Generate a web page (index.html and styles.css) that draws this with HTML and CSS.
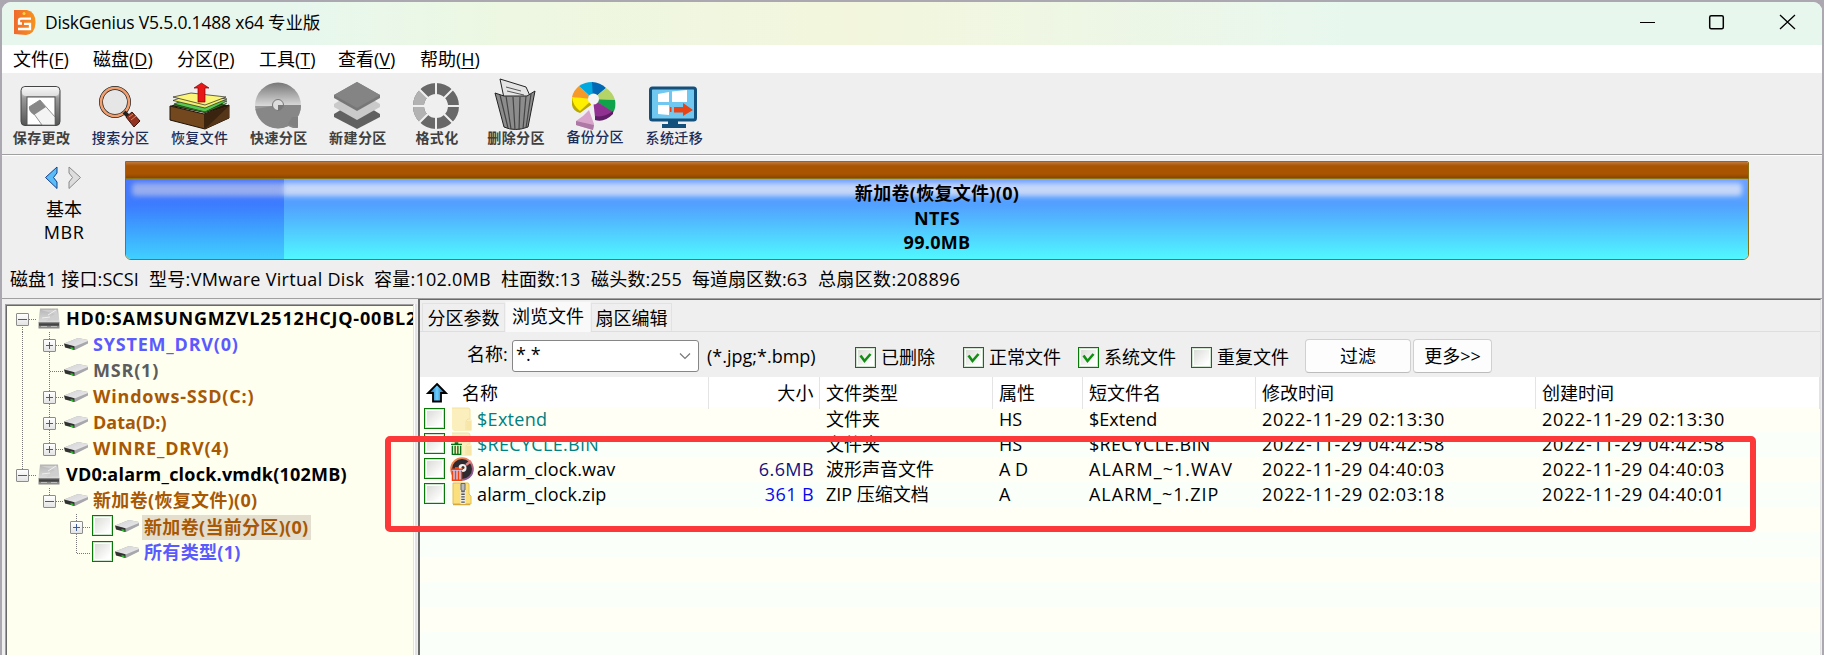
FILE: index.html
```html
<!DOCTYPE html>
<html lang="zh-CN">
<head>
<meta charset="utf-8">
<title>DiskGenius</title>
<link rel="stylesheet" href="styles.css">
</head>
<body>
<svg class="defs" width="0" height="0">
  <defs>
    <linearGradient id="gPart" x1="0" y1="0" x2="1" y2="1"><stop offset="0" stop-color="#d2d2d4"/><stop offset="1" stop-color="#ececee"/></linearGradient>
    <linearGradient id="gHdd" x1="0" y1="0" x2="0" y2="1"><stop offset="0" stop-color="#b4b4b4"/><stop offset="1" stop-color="#dcdcdc"/></linearGradient>
    <linearGradient id="gSave" x1="0" y1="0" x2="0" y2="1"><stop offset="0" stop-color="#fafafa"/><stop offset=".3" stop-color="#999"/><stop offset="1" stop-color="#555"/></linearGradient>
    <linearGradient id="gDisc" x1="0" y1="0" x2="0" y2="1"><stop offset="0" stop-color="#777"/><stop offset=".5" stop-color="#d8d8d8"/><stop offset=".52" stop-color="#9a9a9a"/><stop offset="1" stop-color="#8a8a8a"/></linearGradient>
    <linearGradient id="gLogo" x1="0" y1="0" x2="1" y2="0"><stop offset="0" stop-color="#ee6a2c"/><stop offset="1" stop-color="#f79420"/></linearGradient>
    <linearGradient id="gWav" x1="0" y1="0" x2="1" y2="1"><stop offset="0" stop-color="#ff8a3c"/><stop offset=".5" stop-color="#d87868"/><stop offset="1" stop-color="#6048b0"/></linearGradient>
    <linearGradient id="gUp" x1="0" y1="0" x2="1" y2="0"><stop offset="0" stop-color="#0a4c96"/><stop offset=".5" stop-color="#6ad0ff"/><stop offset="1" stop-color="#0a4c96"/></linearGradient>
    <symbol id="part" viewBox="0 0 24 14">
      <path d="M0 6.500 14 1 24 3V6.500L11 13 9 12.500z" fill="#a8a8ac"/>
      <path d="M0 6.500 14 1 24 3 24 4 10.500 9.500z" fill="url(#gPart)"/>
      <path d="M0 6.500 10.500 9.300V13L1 10.500z" fill="#30322f"/>
      <path d="M6.500 10 9.500 10.800V12.600L6.500 11.800z" fill="#28b828"/>
    </symbol>
    <symbol id="hdd" viewBox="0 0 22 21">
      <path d="M2 .5H20L21.500 14H.5z" fill="url(#gHdd)"/>
      <path d="M3 2 19 2 20.500 12 8 13 17 6z" fill="#cfcfcf"/>
      <path d="M10 7 18 2M4 10 12 9" stroke="#eee" stroke-width="1"/>
      <rect x=".5" y="14" width="21" height="6.500" fill="#8a8a8a"/>
      <path d="M1 16.500H21" stroke="#444" stroke-width="2.500"/>
      <path d="M3 18.500H9M13 18.500H19" stroke="#bbb"/>
    </symbol>
    <symbol id="folder" viewBox="0 0 22 24">
      <path d="M1 1H17Q19 1 19 3V12Q21 12 21 14V23Q21 24 19 24H3Q1 23 1 21z" fill="#fbefbd"/>
      <path d="M1 1H17Q19 1 19 3V12H17Q15 13 15 15V23" fill="none" stroke="#f3e2a0"/>
      <path d="M16 14H20V23H16z" fill="#f7e6a5"/>
    </symbol>
    <symbol id="bin" viewBox="0 0 12 14">
      <path d="M0 2.500H12M4 1H8M1.500 4V13.500H10.500V4M4.500 4V13M7.500 4V13" fill="none" stroke="currentColor" stroke-width="1.500"/>
    </symbol>
  </defs>
</svg>

<div class="window">
  <header class="titlebar">
    <svg class="logo" width="22" height="25" viewBox="0 0 22 25"><path d="M0 0H13Q22 2 21.500 13Q21 24 12 25L0 24z" fill="url(#gLogo)"/><path d="M17 8.700H7Q5 8.700 5 10.500V13.500H8M10 13.800H16V19H4" fill="none" stroke="#fff" stroke-width="2.300"/><circle cx="10" cy="3.500" r="1.500" fill="#ffd23c"/></svg>
    <span class="title">DiskGenius V5.5.0.1488 x64 专业版</span>
    <svg class="winbtns" width="150" height="16" viewBox="0 0 150 16"><path d="M0 8.500H15" stroke="#000"/><rect x="69.700" y="1.700" width="13.600" height="13" rx="1.500" fill="none" stroke="#000" stroke-width="1.500"/><path d="M140 1 155 15M155 1 140 15" stroke="#000" stroke-width="1.300"/></svg>
  </header>
  <nav class="menubar">
    <span class="m1">文件(<u>F</u>)</span><span class="m2">磁盘(<u>D</u>)</span><span class="m3">分区(<u>P</u>)</span><span class="m4">工具(<u>T</u>)</span><span class="m5">查看(<u>V</u>)</span><span class="m6">帮助(<u>H</u>)</span>
  </nav>
  <div class="toolbar">
    <div class="tool">
      <svg width="62" height="52" viewBox="0 0 62 52"><g transform="translate(-1 -1)"><rect x="11" y="8.500" width="39" height="39" rx="4" fill="url(#gSave)" stroke="#444"/><rect x="12" y="9" width="37" height="9" rx="4" fill="#f5f5f5" opacity=".7"/><rect x="17" y="19" width="28" height="28" fill="#fff" stroke="#555"/><path d="M19 29 30 22 45 39V47H32z" fill="#f4f4f4" stroke="#666" stroke-width=".7"/><path d="M19 29 30 22 36 29 24 37Q18 33 19 29z" fill="#888"/></g></svg>
      <span>保存更改</span></div>
    <div class="tool blue">
      <svg width="62" height="52" viewBox="0 0 62 52"><circle cx="25" cy="23" r="14" fill="#e6e6e6" stroke="#222" stroke-width="4"/><circle cx="25" cy="23" r="14" fill="none" stroke="#f2a070" stroke-width="2.600"/><path d="M34 33 38 37" stroke="#222" stroke-width="4"/><path d="M36 38 42 33 50 42 44 48z" fill="#93321f" stroke="#3c140c"/><path d="M39 38 43 35M41 41 46 37" stroke="#e08860"/></svg>
      <span>搜索分区</span></div>
    <div class="tool blue">
      <svg width="62" height="52" viewBox="0 0 62 52"><path d="M1 27 35 35 60 26V39L36 50 1 41z" fill="#74481f" stroke="#1e1206"/><path d="M35 50V35L60 27V39z" fill="#3a2410"/><path d="M36 50 60 27V39z" fill="#563618"/><path d="M1 27 12 23H50L60 27 36 34z" fill="#2a1a0c"/><path d="M5 25 22 18 58 22 36 33z" fill="#58c850" stroke="#183c10" stroke-width=".7"/><path d="M4 21.500 22 15 58 20 36 29z" fill="#f2ee70" stroke="#222" stroke-width=".7"/><path d="M5 26 36 33 58 24" stroke="#2c7028" fill="none"/><path d="M4 18 22 14 57 18 36 26z" fill="#fbf57a" stroke="#222" stroke-width=".7"/><path d="M29 23V9H25L32.500 4 40 9H36V23z" fill="#e81818" stroke="#8a0000" stroke-width=".7"/></svg>
      <span>恢复文件</span></div>
    <div class="tool">
      <svg width="62" height="52" viewBox="0 0 62 52"><g transform="translate(-1 -1)"><circle cx="31" cy="27.500" r="23" fill="url(#gDisc)"/><path d="M31 27H54A23 23 0 0 1 45 45L51 50H46L41 48A23 23 0 0 1 8.500 31Z" fill="#878787"/><path d="M45 39H51V50L41 46z" fill="#808080"/><circle cx="31" cy="27" r="5.500" fill="#ddd" stroke="#777"/><path d="M31 27V32.500A5.500 5.500 0 0 0 36.500 27z" fill="#777"/></g></svg>
      <span>快速分区</span></div>
    <div class="tool">
      <svg width="62" height="52" viewBox="0 0 62 52"><path d="M7 35 30 21 53 35V38L30 50 7 38z" fill="#606060"/><path d="M7 25 30 11 53 25V28L30 41 7 28z" fill="#cacaca"/><path d="M7 16 30 3 53 16V19L30 32 7 19z" fill="#777"/><path d="M7 16 30 3 53 16 30 29z" fill="#848484"/></svg>
      <span>新建分区</span></div>
    <div class="tool">
      <svg width="62" height="52" viewBox="0 0 62 52"><g transform="translate(-1 -1)"><circle cx="31" cy="28" r="17.500" fill="none" stroke="#686868" stroke-width="11"/><path d="M13.500 28A17.500 17.500 0 0 1 18.600 15.600M13.500 28A17.500 17.500 0 0 0 18.600 40.400" fill="none" stroke="#b2b2b2" stroke-width="11"/><path d="M31 3V17M31 39V53M6 28H20M42 28H56M13.500 10.500 23 20M39 36 48.500 45.500M13.500 45.500 23 36M39 20 48.500 10.500" stroke="#efefef" stroke-width="2"/></g></svg>
      <span>格式化</span></div>
    <div class="tool">
      <svg width="62" height="52" viewBox="0 0 62 52"><path d="M15 0 41 8 46 19H19z" fill="#e4e4e4" stroke="#222"/><path d="M21 8 36 12M22 12 39 16" stroke="#555"/><path d="M10 14 19 17H42L50 12 43 48Q30 53 19 48z" fill="#8c8c8c" stroke="#222"/><path d="M15 16 23 49M21 17 26 50M28 18 30 51M35 18 34 51M41 17 38 50M46 15 41 49" stroke="#444" stroke-width="1.200"/></svg>
      <span>删除分区</span></div>
    <div class="tool blue pie">
      <svg width="62" height="52" viewBox="0 0 62 52"><path d="M8 18V26Q9 32 16 34L27 26V20z" fill="#b8a800"/><path d="M29 20 8 18A22 20 0 0 0 16 32z" fill="#fff000"/><path d="M29 20 8 18A22 20 0 0 1 15 7z" fill="#f59a28"/><path d="M29 20 15 7A22 20 0 0 1 29 3z" fill="#00a8e0"/><path d="M29 20 28 3A22 20 0 0 1 42 9z" fill="#0068b4"/><path d="M29 20 42 9A22 20 0 0 1 51 21z" fill="#b4d468"/><path d="M29 20 51 21A22 20 0 0 1 49 34z" fill="#10a44a"/><path d="M29 20 49 33A20 20 0 0 1 31 38z" fill="#903090"/><path d="M31 37Q40 39 49 32V35Q40 44 31 41z" fill="#601c68"/><circle cx="29.500" cy="20" r="5.500" fill="#f4f4f4"/><path d="M25 31 30 45 29 51 12 46V42Q20 37 25 31z" fill="#d8a4cc"/><path d="M12 42 30 46 29 51 12 46z" fill="#ae78a4"/></svg>
      <span>备份分区</span></div>
    <div class="tool blue">
      <svg width="62" height="52" viewBox="0 0 62 52"><g transform="translate(-1 -1)"><rect x="8.500" y="10" width="45" height="32" rx="2" fill="#70c8f0" stroke="#14507c" stroke-width="3"/><path d="M26 43H36V46H44V50H20V46H26z" fill="#14507c"/><path d="M16 16 27 14V24H16zM30 13.500 45 12V24H30zM16 27H27V37L16 36z" fill="#fff"/><path d="M28 29H29.500V34H28zM32 29H41V25L51 32 41 38V34.500H32z" fill="#e84418"/></g></svg>
      <span>系统迁移</span></div>
  </div>

  <section class="diskpanel">
    <div class="disktype">
      <svg width="38" height="26" viewBox="0 0 38 26"><path d="M13 2V8L9.500 12.500 13 17V23.500L1.500 12.500z" fill="#5cbcf8" stroke="#12408c"/><path d="M25 2V8L28.500 12.500 25 17V23.500L36.500 12.500z" fill="#ddd" stroke="#8a8a8a"/></svg>
      <span>基本</span><span class="mbr">MBR</span>
    </div>
    <div class="volume">
      <div class="volcap"></div>
      <div class="volbody"><div class="used"></div><div class="gloss"></div>
        <div class="voltext"><b>新加卷(恢复文件)(0)</b><b>NTFS</b><b>99.0MB</b></div></div>
    </div>
  </section>
  <div class="diskinfo"><span class="i1">磁盘1 接口:SCSI</span><span class="i2">型号:VMware Virtual Disk</span><span class="i3">容量:102.0MB</span><span class="i4">柱面数:13</span><span class="i5">磁头数:255</span><span class="i6">每道扇区数:63</span><span class="i7">总扇区数:208896</span></div>

  <main class="split">
    <aside class="tree">
      <div class="node root"><i class="g dn h"><em class="minus"></em></i><svg class="hdd" width="22" height="21"><use href="#hdd"/></svg><b class="hd0">HD0:SAMSUNGMZVL2512HCJQ-00BL2</b></div>
      <div class="node c-blue"><i class="g v"></i><i class="g v h"><em></em></i><svg class="part" width="24" height="14"><use href="#part"/></svg><b>SYSTEM_DRV(0)</b></div>
      <div class="node c-gray"><i class="g v"></i><i class="g v h"></i><svg class="part" width="24" height="14"><use href="#part"/></svg><b>MSR(1)</b></div>
      <div class="node"><i class="g v"></i><i class="g v h"><em></em></i><svg class="part" width="24" height="14"><use href="#part"/></svg><b>Windows-SSD(C:)</b></div>
      <div class="node"><i class="g v"></i><i class="g v h"><em></em></i><svg class="part" width="24" height="14"><use href="#part"/></svg><b class="tight">Data(D:)</b></div>
      <div class="node"><i class="g v"></i><i class="g up h"><em></em></i><svg class="part" width="24" height="14"><use href="#part"/></svg><b>WINRE_DRV(4)</b></div>
      <div class="node root"><i class="g up h"><em class="minus"></em></i><svg class="hdd" width="22" height="21"><use href="#hdd"/></svg><b class="vd0">VD0:alarm_clock.vmdk(102MB)</b></div>
      <div class="node"><i class="g"></i><i class="g up h"><em class="minus"></em></i><svg class="part" width="24" height="14"><use href="#part"/></svg><b class="cjk">新加卷(恢复文件)(0)</b></div>
      <div class="node"><i class="g"></i><i class="g"></i><i class="g v h"><em></em></i><span class="check"></span><svg class="part" width="24" height="14"><use href="#part"/></svg><b class="cjk sel">新加卷(当前分区)(0)</b></div>
      <div class="node c-blue"><i class="g"></i><i class="g"></i><i class="g up h"></i><span class="check"></span><svg class="part" width="24" height="14"><use href="#part"/></svg><b class="cjk">所有类型(1)</b></div>
    </aside>

    <section class="pane">
      <div class="tabs"><span class="tab t1">分区参数</span><span class="tab active">浏览文件</span><span class="tab t3">扇区编辑</span></div>
      <div class="filter">
        <span class="flabel">名称:</span>
        <span class="combo"><span>*.*</span><svg width="12" height="8" viewBox="0 0 12 8"><path d="M1 1.500 6 6.500 11 1.500" fill="none" stroke="#777" stroke-width="1.200"/></svg></span>
        <span class="hint">(*.jpg;*.bmp)</span>
        <label class="opt o1"><span class="check"><svg width="13" height="13" viewBox="0 0 13 13"><path d="M1.500 4.500 5.500 10 11.500 3" fill="none" stroke="#109010" stroke-width="2.600"/></svg></span>已删除</label>
        <label class="opt o2"><span class="check"><svg width="13" height="13" viewBox="0 0 13 13"><path d="M1.500 4.500 5.500 10 11.500 3" fill="none" stroke="#109010" stroke-width="2.600"/></svg></span>正常文件</label>
        <label class="opt o3"><span class="check"><svg width="13" height="13" viewBox="0 0 13 13"><path d="M1.500 4.500 5.500 10 11.500 3" fill="none" stroke="#109010" stroke-width="2.600"/></svg></span>系统文件</label>
        <label class="opt o4"><span class="check"></span>重复文件</label>
        <button class="btn b1">过滤</button><button class="btn b2">更多&gt;&gt;</button>
      </div>
      <div class="list">
        <div class="row head"><span class="name"><svg class="uparrow" width="20" height="20" viewBox="0 0 20 20"><path d="M10 1 19 10H14V18.500H6V10H1z" fill="url(#gUp)" stroke="#000" stroke-width="1.800"/></svg>名称</span><span class="size">大小</span><span>文件类型</span><span>属性</span><span>短文件名</span><span>修改时间</span><span>创建时间</span></div>
        <div class="row"><span class="name teal"><span class="check"></span><svg class="ficon" width="24" height="24"><use href="#folder" x="1" width="22" height="24"/></svg>$Extend</span><span class="size"></span><span>文件夹</span><span>HS</span><span>$Extend</span><span class="num">2022-11-29 02:13:30</span><span class="num">2022-11-29 02:13:30</span></div>
        <div class="row"><span class="name teal"><span class="check"></span><svg class="ficon" width="24" height="24"><use href="#folder" x="1" width="22" height="24"/><use href="#bin" x="1" y="10" width="11" height="13" color="#087018"/></svg>$RECYCLE.BIN</span><span class="size"></span><span>文件夹</span><span>HS</span><span class="rec">$RECYCLE.BIN</span><span class="num">2022-11-29 04:42:58</span><span class="num">2022-11-29 04:42:58</span></div>
        <div class="row"><span class="name wav"><span class="check"></span><svg class="ficon" width="24" height="24" viewBox="0 0 24 24"><circle cx="12" cy="12" r="11.800" fill="url(#gWav)"/><circle cx="12" cy="12" r="10" fill="#2e2a30"/><circle cx="12.500" cy="11" r="4" fill="#f4f0f0"/><circle cx="13" cy="10.500" r="1.500" fill="#333"/><path d="M21 4 16 8" stroke="#e08080" stroke-width="2.500"/><path d="M2 13H12V23.500H2z" fill="#cfc4e8"/><use href="#bin" x="1" y="9.500" width="12" height="14.500" color="#f04410"/></svg>alarm_clock.wav</span><span class="size navy">6.6MB</span><span>波形声音文件</span><span>A D</span><span class="caps">ALARM_~1.WAV</span><span class="num">2022-11-29 04:40:03</span><span class="num">2022-11-29 04:40:03</span></div>
        <div class="row"><span class="name wav"><span class="check"></span><svg class="ficon" width="24" height="24" viewBox="0 0 24 24"><path d="M3 1H18Q19 1 19 3V12L21 14V22H3z" fill="#fbdf7c" stroke="#e6c04c"/><path d="M3 22.500H20" stroke="#d8a83c" stroke-width="1.500"/><path d="M13 4V22" stroke="#eee" stroke-width="5"/><path d="M13 9V22" stroke="#555" stroke-width="3.500" stroke-dasharray="1.300 1.300"/><path d="M11 1.500H15V8Q13 10.500 11 8z" fill="#bbb" stroke="#666"/></svg>alarm_clock.zip</span><span class="size bright">361 B</span><span>ZIP 压缩文档</span><span>A</span><span class="caps zip">ALARM_~1.ZIP</span><span class="num">2022-11-29 02:03:18</span><span class="num">2022-11-29 04:40:01</span></div>
      </div>
    </section>
  </main>
</div>
<div class="highlight"></div>
</body>
</html>
```
FILE: styles.css
```css
* { box-sizing: border-box; }
body {
  margin: 0; width: 1824px; height: 655px; overflow: hidden; position: relative;
  padding: 2px 2px 0; background: #aca8b2; color: #000;
  font: 18px/24px "Open Sans", "Noto Sans CJK SC", sans-serif;
}
.defs { position: absolute; }
svg { display: block; flex: none; overflow: visible; }
.window { height: 660px; display: flex; flex-direction: column; background: #efefef; border-radius: 9px 9px 0 0; overflow: hidden; }

.titlebar { flex: none; height: 43px; display: flex; align-items: center; padding: 0 32px 3px 12px; background: linear-gradient(90deg, #e8f7ee 0, #e8f7ee 300px, #edf7e2 500px, #f3f6dd 850px, #e8f7ee 1350px); }
.title { margin-left: 9px; letter-spacing: -.2px; font-size: 17.500px; }
.winbtns { margin-left: auto; }

.menubar { flex: none; height: 28px; display: flex; background: #fff; padding-left: 11px; line-height: 28px; white-space: nowrap; }
.menubar span { font-size: 18px; }
.menubar u { text-underline-offset: 2px; text-decoration-thickness: 1px; }
.m1 { width: 80px; } .m2 { width: 84px; } .m3 { width: 82px; } .m4 { width: 79px; } .m5 { width: 82px; } .m6 { width: 80px; }

.toolbar { flex: none; height: 82px; display: flex; padding: 6px 0 0 0; border-bottom: 1px solid #a0a0a0; }
.tool { width: 79.100px; height: 72px; display: flex; flex-direction: column; align-items: center; }
.tool span { font: 700 14px/18px "Noto Sans CJK SC", sans-serif; color: #404040; margin-top: -3px; letter-spacing: .4px; }
.tool.blue span { color: #1c2c58; font-weight: 500; }
.tool.pie span { margin-top: -4px; }

.diskpanel { flex: none; height: 106px; display: flex; border-top: 1px solid #fff; padding: 5px 0 0; }
.disktype { width: 123px; display: flex; flex-direction: column; align-items: center; padding: 4px 0 0 1px; }
.disktype span { line-height: 24px; }
.disktype .mbr { letter-spacing: .6px; margin-top: -1px; }
.disktype svg { margin: 0 2px 6px 0; }
.volume { width: 1624px; height: 99px; border: 1px solid #8a7010; border-radius: 0 2px 6px 6px; overflow: hidden; display: flex; flex-direction: column; }
.volcap { flex: none; height: 17px; background: linear-gradient(#c07838, #a85400 4px, #a85400 12px, #8c4400); border-bottom: 1px solid #8a7010; }
.volbody { flex: 1; position: relative; background: linear-gradient(#70a0ff 0, #52a0ff 26px, #50f8ff 100%); }
.used { position: absolute; left: 0; top: 0; bottom: 0; width: 158px; background: linear-gradient(#4c78f8 0, #3c7cff 26px, #40d0ff 100%); }
.gloss { position: absolute; left: 6px; right: 6px; top: 4px; height: 13px; border-radius: 4px; filter: blur(2.500px); background: linear-gradient(90deg, rgba(200, 205, 232, .62) 152px, rgba(228, 232, 246, .76) 152px); }
.voltext { position: relative; display: flex; flex-direction: column; align-items: center; padding-top: 2px; }
.voltext b { line-height: 24.500px; font-weight: 700; letter-spacing: .3px; }

.diskinfo { flex: none; height: 37px; display: flex; white-space: nowrap; padding: 6px 0 0 8px; line-height: 24px; }
.i1 { width: 139px; letter-spacing: .1px; } .i2 { width: 225px; letter-spacing: .3px; } .i3 { width: 127px; letter-spacing: .25px; } .i4 { width: 90px; } .i5 { width: 101px; letter-spacing: .2px; } .i6 { width: 126px; } .i7 { letter-spacing: .35px; }

.split { flex: 1; display: flex; min-height: 0; border-top: 1px solid #a0a0a0; }
.tree { flex: none; width: 409px; margin: 5px 0 0 3px; border: 1px solid #a0a0a0; border-right-color: #e3e3e3; box-shadow: inset 1px 1px #696969, 1px 0 #fff, 3px 0 #e3e3e3; background: #fffff0; padding: 1px 0 0 3px; overflow: hidden; }
.node { height: 26px; display: flex; align-items: center; white-space: nowrap; color: #a85804; overflow: hidden; }
.node.root { color: #000; }
.node.c-blue { color: #5a5aff; } .node.c-gray { color: #5c5c5c; }
.node b { font-weight: 700; margin-left: 5px; line-height: 26px; letter-spacing: .8px; position: relative; top: -1px; }
.node b.tight { letter-spacing: 0; }
.node b.hd0 { margin-left: 6px; letter-spacing: .8px; }
.node b.vd0 { margin-left: 6px; letter-spacing: .22px; }
.node b.cjk { letter-spacing: .32px; }
.node .sel { background: #e3decd; margin-left: 3px; padding: 0 2px; top: 0; line-height: 25px; }
.g { flex: none; width: 27px; height: 26px; display: flex; align-items: center; justify-content: center; background-repeat: no-repeat; --v: repeating-linear-gradient(#777 0 1px, transparent 1px 2px); --h: repeating-linear-gradient(90deg, #777 0 1px, transparent 1px 2px); }
.g.v { background: var(--v) 13px 0 / 1px 26px no-repeat; }
.g.v.h { background: var(--v) 13px 0 / 1px 26px no-repeat, var(--h) 14px 13px / 14px 1px no-repeat; }
.g.up.h { background: var(--v) 13px 0 / 1px 13px no-repeat, var(--h) 14px 13px / 14px 1px no-repeat; }
.g.dn.h { background: var(--v) 13px 13px / 1px 13px no-repeat, var(--h) 14px 13px / 14px 1px no-repeat; }
.g em { width: 13px; height: 13px; border: 1px solid #8c8c8c; border-radius: 1px; background: linear-gradient(#3c5c9c, #3c5c9c) 2px 5px / 7px 1px no-repeat, linear-gradient(#3c5c9c, #3c5c9c) 5px 2px / 1px 7px no-repeat, linear-gradient(#fff, #e4e4e4); }
.g em.minus { background: linear-gradient(#3c5c9c, #3c5c9c) 1px 5px / 9px 1px no-repeat, linear-gradient(#fff, #e4e4e4); }
.hdd { margin: -2px 0 0 2px; }
.part { margin-left: 1px; margin-top: -3px; }
.check { flex: none; width: 21px; height: 21px; border: 1px solid #087808; box-shadow: inset 0 0 0 1px rgba(8, 120, 8, .2), inset 0 0 0 2px #fff; background: linear-gradient(135deg, #d6d6d2, #fff 80%); display: flex; align-items: center; justify-content: center; }
.node .check { margin: -3px 1px 0 2px; }

.pane { flex: 1; margin: 0 1px 0 4px; border-left: 2px solid #696969; border-top: 1px solid #696969; border-right: 1px solid #e3e3e3; display: flex; flex-direction: column; min-width: 0; }
.tabs { flex: none; height: 32px; display: flex; align-items: flex-end; padding-left: 2px; border-bottom: 1px solid #dedede; }
.tab { height: 28px; line-height: 29px; border: 1px solid #e2e2e2; border-bottom: 0; text-align: center; }
.t1 { width: 83px; } .t3 { width: 81px; }
.tab.active { width: 86px; height: 31px; margin-bottom: -1px; background: #f9f9f9; border-color: #f2f2f2; }
.filter { flex: none; height: 45px; display: flex; align-items: center; white-space: nowrap; padding-left: 47px; }
.flabel { width: 45px; margin-top: -1px; }
.combo { width: 187px; height: 32px; margin-top: 2px; background: #fff; border: 1px solid #868686; border-radius: 3px; display: flex; align-items: center; justify-content: space-between; padding: 0 7px 0 3px; }
.combo span { margin-top: -4px; }
.hint { width: 156px; padding: 3px 0 0 8px; }
.opt { display: flex; align-items: center; gap: 5px; line-height: 24px; margin-top: 5px; }
.o1 { width: 108px; } .o2 { width: 115px; } .o3 { width: 113px; } .o4 { width: 114px; }
.btn { height: 34px; margin: 2px 0 0; padding: 1px 0 0; border: 1px solid #d0d0d0; border-bottom-color: #bcbcbc; border-radius: 4px; background: #fdfdfd; font: inherit; color: #000; }
.b1 { width: 106px; } .b2 { width: 79px; margin-left: 2px; }

.list { flex: 1; background: repeating-linear-gradient(#fffff5 0 25px, #fafff9 25px 50px) 0 30px; }
.row { height: 25px; display: grid; grid-template-columns: 289px 111px 173px 90px 173px 280px 284px; line-height: 25px; white-space: nowrap; }
.row > span { padding-left: 6px; }
.row > .name { display: flex; align-items: center; padding-left: 4px; }
.row > .size { text-align: right; padding: 0 6px 0 0; }
.head { height: 30px; line-height: 32px; background: #fff; }
.head > span { border-right: 1px solid #e4e4e4; }
.head > .size { padding-right: 5px; }
.head > .name { padding-left: 7px; }
.uparrow { margin: 0 15px 0 0; }
.row .check { margin-top: -2px; }
.ficon { margin: -1px 3px 0 5px; }
.num { letter-spacing: .7px; }
.row .caps { letter-spacing: 1.050px; }
.row .caps.zip { letter-spacing: .95px; }
.row .rec { letter-spacing: .25px; }
.row .wav { letter-spacing: .15px; }
.teal { color: #008080; letter-spacing: .3px; } .navy { color: #12127c; } .bright { color: #0808f0; }
.size { letter-spacing: .4px; }
.highlight { position: absolute; left: 385px; top: 436px; width: 1371px; height: 96px; border: 6px solid #fd3838; border-radius: 5px; }
```
